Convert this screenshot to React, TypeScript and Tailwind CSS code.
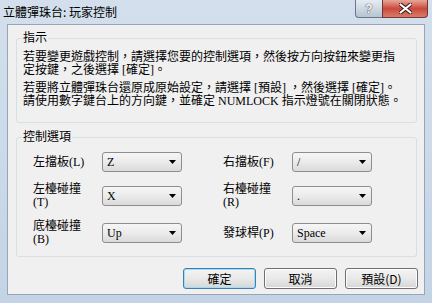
import React from 'react';

const ming = "font-['Liberation_Serif','Noto_Sans_CJK_TC',serif]";
const ui = "font-['Noto_Sans_CJK_TC','Noto_Sans',sans-serif]";

function Combo({ value }: { value: string }) {
    return (
        <div className="flex h-[20px] w-[80px] items-center justify-between rounded-[3px] border border-[#8d8d8d] bg-gradient-to-b from-[#f6f6f6] via-[#ebebeb] to-[#dadada] pl-[4px] pr-[5px]">
            <span className={`${ming} text-[12px] leading-[12px] text-black`}>{value}</span>
            <svg width="7" height="4" viewBox="0 0 7 4">
                <path d="M0 0h7L3.5 4z" fill="#000" />
            </svg>
        </div>
    );
}

function DlgButton({ label, primary }: { label: string; primary?: boolean }) {
    return (
        <button
            className={`${ui} flex h-[21px] w-[73px] items-center justify-center rounded-[3px] border bg-gradient-to-b from-[#f4f4f4] via-[#e9e9e9] to-[#d6d6d6] text-[12px] leading-[12px] text-black ${
                primary ? 'border-[#3c7fb1] shadow-[inset_0_0_0_1px_#a4dcf6]' : 'border-[#707070] shadow-[inset_0_0_0_1px_#fcfcfc]'
            }`}
        >
            {label}
        </button>
    );
}

function Row({ label, value, h }: { label: React.ReactNode; value: string; h: string }) {
    return (
        <>
            <div className={`${ming} flex items-center ${h} text-[12px] leading-[13px] text-black`}>{label}</div>
            <div className={`flex items-center ${h}`}>
                <Combo value={value} />
            </div>
        </>
    );
}

export default function App() {
    return (
        <div className="flex h-[303px] w-[432px] flex-col bg-gradient-to-b from-[#d3dfec] to-[#c4d4e6]">
            {/* Title bar */}
            <div className="flex h-[24px] items-start justify-between pl-[3px] pr-[4px]">
                <div className={`${ui} mt-[5px] text-[12px] leading-[13px] text-black`}>立體彈珠台: 玩家控制</div>
                <div className="flex">
                    <div className="flex h-[18px] w-[27px] items-center justify-center rounded-bl-[4px] border border-t-0 border-r-0 border-[#6b7786] bg-gradient-to-b from-[#e6ecf2] via-[#cfd8e2] to-[#b8c4d2]">
                        <span className="font-['Liberation_Sans',sans-serif] text-[12px] font-bold leading-[12px] text-white [text-shadow:0_0_1px_#334,0_0_1px_#334]">?</span>
                    </div>
                    <div className="flex h-[18px] w-[46px] items-center justify-center rounded-br-[4px] border border-t-0 border-[#6b3a38] bg-gradient-to-b from-[#e8a698] via-[#c9493c] to-[#d97a6a]">
                        <svg width="13" height="11" viewBox="0 0 13 11">
                            <path d="M1 1L12 10M12 1L1 10" stroke="#3a1a18" strokeWidth="4" strokeLinecap="round" />
                            <path d="M1.5 1.5L11.5 9.5M11.5 1.5L1.5 9.5" stroke="#fff" strokeWidth="2.2" strokeLinecap="round" />
                        </svg>
                    </div>
                </div>
            </div>

            {/* Client area */}
            <div className="mx-[7px] mb-[8px] flex flex-1 flex-col border border-[#97a5b6] bg-[#f0f0f0] pl-[8px] pr-[6px] pt-[7px]">
                <fieldset className="mr-[1px] h-[91px] rounded-[3px] border border-[#d5dfe5] p-0">
                    <legend className={`${ming} ml-[5px] px-[1px] text-[12px] leading-[12px] text-black`}>指示</legend>
                    <div className={`${ming} whitespace-nowrap pl-[6px] pt-[7px] text-[12px] leading-[13px] text-black`}>
                        <p>
                            若要變更遊戲控制，請選擇您要的控制選項，然後按方向按鈕來變更指
                            <br />
                            定按鍵，之後選擇 [確定]。
                        </p>
                        <p className="mt-[5px]">
                            若要將立體彈珠台還原成原始設定，請選擇 [預設] ，然後選擇 [確定]。
                            <br />
                            請使用數字鍵台上的方向鍵，並確定 NUMLOCK 指示燈號在關閉狀態。
                        </p>
                    </div>
                </fieldset>

                <fieldset className="mr-[1px] mt-[8px] h-[126px] rounded-[3px] border border-[#d5dfe5] p-0">
                    <legend className={`${ming} ml-[5px] px-[1px] text-[12px] leading-[12px] text-black`}>控制選項</legend>
                    <div className="grid grid-cols-[69px_80px_41px_69px_80px] grid-rows-[20px_26px_26px] gap-y-[11px] pl-[16px] pt-[9px]">
                        <Row label="左擋板(L)" value="Z" h="h-[20px]" />
                        <div />
                        <Row label="右擋板(F)" value="/" h="h-[20px]" />
                        <Row label={<span>左檯碰撞<br />(T)</span>} value="X" h="h-[26px]" />
                        <div />
                        <Row label={<span>右檯碰撞<br />(R)</span>} value="." h="h-[26px]" />
                        <Row label={<span>底檯碰撞<br />(B)</span>} value="Up" h="h-[26px]" />
                        <div />
                        <Row label="發球桿(P)" value="Space" h="h-[26px]" />
                    </div>
                </fieldset>

                <div className="mt-[11px] flex justify-end gap-[8px]">
                    <DlgButton label="確定" primary />
                    <DlgButton label="取消" />
                    <DlgButton label="預設(D)" />
                </div>
            </div>
        </div>
    );
}
